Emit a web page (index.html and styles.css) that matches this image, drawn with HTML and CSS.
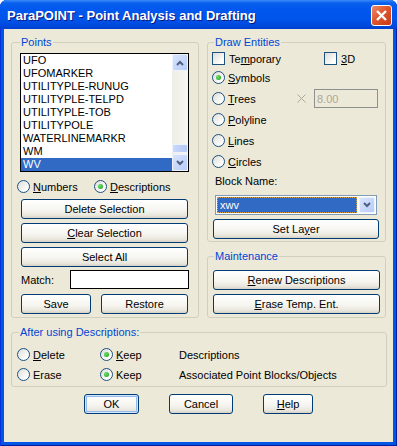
FILE: index.html
```html
<!DOCTYPE HTML>
<html>
    <head>
        <title>ParaPOINT - Point Analysis and Drafting</title>
        <meta name="viewport" content="width=device-width, initial-scale=1">
        <link rel="stylesheet" href="styles.css">
    </head>
    <body>
        <div class="window">
            <div class="titlebar">
                <span class="title">ParaPOINT - Point Analysis and Drafting</span>
                <span class="close">
                    <svg width="19" height="19" viewBox="0 0 19 19"><path d="M5 5 L14 14 M14 5 L5 14" /></svg>
                </span>
            </div>
            <div class="client">
                <div class="top">
                    <fieldset class="group points">
                        <legend>Points</legend>
                        <div class="listbox">
                            <ul class="items">
                                <li>UFO</li>
                                <li>UFOMARKER</li>
                                <li>UTILITYPLE-RUNUG</li>
                                <li>UTILITYPLE-TELPD</li>
                                <li>UTILITYPLE-TOB</li>
                                <li>UTILITYPOLE</li>
                                <li>WATERLINEMARKR</li>
                                <li>WM</li>
                                <li class="sel">WV</li>
                            </ul>
                            <div class="vscroll">
                                <span class="sbtn"><svg width="8" height="6" viewBox="0 0 8 6"><path d="M1 5 L4 2 L7 5" /></svg></span>
                                <span class="track"><span class="thumb"></span></span>
                                <span class="sbtn"><svg width="8" height="6" viewBox="0 0 8 6"><path d="M1 1 L4 4 L7 1" /></svg></span>
                            </div>
                        </div>
                        <div class="radios">
                            <span class="opt num"><span class="radio"></span><span><u>N</u>umbers</span></span>
                            <span class="opt"><span class="radio on"></span><span><u>D</u>escriptions</span></span>
                        </div>
                        <button class="btn wide first">Delete Selection</button>
                        <button class="btn wide"><u>C</u>lear Selection</button>
                        <button class="btn wide">Select All</button>
                        <div class="match">
                            <label for="match">Match:</label>
                            <input class="edit" type="text" id="match">
                        </div>
                        <div class="pair">
                            <button class="btn save">Save</button>
                            <button class="btn restore">Restore</button>
                        </div>
                    </fieldset>

                    <div class="rightcol">
                        <fieldset class="group draw">
                            <legend>Draw Entities</legend>
                            <div class="checks">
                                <span class="opt"><span class="check"></span><span>Te<u>m</u>porary</span></span>
                                <span class="opt"><span class="check"></span><span><u>3</u>D</span></span>
                            </div>
                            <span class="opt sym"><span class="radio on"></span><span><u>S</u>ymbols</span></span>
                            <div class="opt trees">
                                <span class="tlabel"><span class="radio"></span><span><u>T</u>rees</span></span>
                                <svg class="xmark" width="9" height="9" viewBox="0 0 9 9"><path d="M0.5 0.5 L8.5 8.5 M8.5 0.5 L0.5 8.5" /></svg>
                                <input class="edit off" type="text" value="8.00" disabled>
                            </div>
                            <span class="opt row"><span class="radio"></span><span><u>P</u>olyline</span></span>
                            <span class="opt row"><span class="radio"></span><span><u>L</u>ines</span></span>
                            <span class="opt row"><span class="radio"></span><span><u>C</u>ircles</span></span>
                            <div class="blabel">Block Name:</div>
                            <div class="combo">
                                <span class="cval">xwv</span>
                                <span class="cbtn"><svg width="8" height="6" viewBox="0 0 8 6"><path d="M1 1 L4 4 L7 1" /></svg></span>
                            </div>
                            <button class="btn wide layer">Set La<u>y</u>er</button>
                        </fieldset>

                        <fieldset class="group maint">
                            <legend>Maintenance</legend>
                            <button class="btn"><u>R</u>enew Descriptions</button>
                            <button class="btn erase"><u>E</u>rase Temp. Ent.</button>
                        </fieldset>
                    </div>
                </div>

                <fieldset class="group after">
                    <legend>After using Descriptions:</legend>
                    <div class="grid">
                        <span class="opt"><span class="radio"></span><span><u>D</u>elete</span></span>
                        <span class="opt"><span class="radio on"></span><span><u>K</u>eep</span></span>
                        <span class="opt">Descriptions</span>
                        <span class="opt"><span class="radio"></span><span>Erase</span></span>
                        <span class="opt"><span class="radio on"></span><span>Keep</span></span>
                        <span class="opt">Associated Point Blocks/Objects</span>
                    </div>
                </fieldset>

                <div class="actions">
                    <button class="btn ok">OK</button>
                    <button class="btn cancel">Cancel</button>
                    <button class="btn help"><u>H</u>elp</button>
                </div>
            </div>
        </div>
    </body>
</html>
```

FILE: styles.css
```css
* { box-sizing: border-box; }
body { margin: 0; font-family: "Liberation Sans", Arial, sans-serif; font-size: 11px; color: #000; }
u { text-decoration: underline; text-underline-offset: 1px; }

.window { width: 397px; height: 446px; display: flex; flex-direction: column; background: #0055E5; border-radius: 7px 7px 0 0; overflow: hidden; box-shadow: inset 1px 0 #0831D9, inset -1px 0 #001EA0, inset 0 -1px #001EA0; }
.titlebar { height: 29px; flex: none; display: flex; align-items: center; padding: 2px 5px 0 7px; background: linear-gradient(#3C8CF8 0%, #0A61EE 10%, #0058EE 30%, #0055EB 65%, #0049DD 88%, #003FCF 100%); }
.title { flex: 1; color: #fff; font-weight: bold; font-size: 13px; text-shadow: 1px 1px 0 #0A1883; }
.close { width: 21px; height: 21px; display: flex; align-items: center; justify-content: center; border: 1px solid #fff; border-radius: 3px; background: linear-gradient(135deg, #EE8A6C, #E0572F 45%, #C93A14); }
.close path { stroke: #fff; stroke-width: 2.4; fill: none; }

.client { flex: 1; margin: 0 4px 4px; background: #ECE9D8; padding: 7px 0 0 7px; }
.top { display: flex; gap: 8px; }

.group { margin: 0; min-width: 0; border: 1px solid #D0D0BF; border-radius: 3px; }
.group legend { padding: 0 1px; line-height: 13px; color: #0046D5; }

.points { width: 188px; padding: 4px 9px 3px 8px; }
.listbox { display: flex; height: 119px; border: 1px solid #000; background: #fff; }
.items { flex: 1; list-style: none; margin: 0; padding: 0; }
.items li { height: 13px; line-height: 13px; padding-left: 2px; }
.items li.sel { background: #316AC5; color: #fff; }
.vscroll { width: 16px; display: flex; flex-direction: column; background: linear-gradient(90deg, #EEEDE5, #F7F7F3); }
.sbtn { height: 17px; flex: none; display: flex; align-items: center; justify-content: center; border: 1px solid #EEF2FD; border-radius: 2px; background: linear-gradient(135deg, #D8E4FD, #B9CCF8); }
.sbtn path, .cbtn path { stroke: #4D6185; stroke-width: 2; fill: none; }
.track { flex: 1; display: flex; flex-direction: column; justify-content: flex-end; padding-bottom: 1px; }
.thumb { height: 9px; border: 1px solid #EEF2FD; border-radius: 2px; background: linear-gradient(90deg, #C9D8FC, #B3C8F6); }

.opt { display: flex; align-items: center; gap: 3px; height: 13px; white-space: nowrap; }
.radio { width: 13px; height: 13px; flex: none; display: flex; align-items: center; justify-content: center; border: 1px solid #1C5180; border-radius: 50%; background: linear-gradient(135deg, #DCDCD7, #FFFFFF 80%); }
.radio.on::after { content: ""; width: 5px; height: 5px; border-radius: 50%; background: radial-gradient(circle at 35% 35%, #6EE06A, #1A9E1A); }
.check { width: 13px; height: 13px; flex: none; border: 1px solid #1C5180; background: linear-gradient(135deg, #DCDCD7, #FFFFFF 80%); margin-right: 1px; }

.radios { display: flex; margin: 8px 0 0 -3px; }
.radios .num { width: 77px; }

.btn { display: flex; align-items: center; justify-content: center; width: 100%; height: 20px; padding: 0; border: 1px solid #003C74; border-radius: 3px; font: inherit; color: #000; background: linear-gradient(#FFFFFF, #F6F5F0 55%, #E9E7DD 85%, #D6D0C5); }
.btn.wide { width: calc(100% - 2px); margin: 4px 1px 0; }
.points .btn.first { margin-top: 6px; }

.match { display: flex; align-items: center; margin-top: 3px; padding-left: 1px; }
.match label { width: 49px; }
.edit { flex: 1; min-width: 0; height: 19px; border: 1px solid #000; background: #fff; font: inherit; padding: 0 2px; }

.pair { display: flex; gap: 10px; margin: 5px 1px 0; }
.save { flex: none; width: 70px; }
.restore { flex: 1; }

.rightcol { display: flex; flex-direction: column; gap: 8px; }
.draw { width: 179px; padding: 3px 5px 2px 4px; }
.draw legend, .maint legend { margin-left: 2px; }
.checks { display: grid; grid-template-columns: 112px auto; }
.sym { margin-top: 6px; }
.row { margin-top: 8px; }
.trees { margin-top: 8px; gap: 0; }
.tlabel { display: flex; align-items: center; gap: 3px; width: 85px; }
.xmark path { stroke: #ACA899; stroke-width: 1; fill: none; }
.edit.off { flex: none; width: 64px; margin-left: 8px; border-color: #8E8F8F; background: #ECE9D8; color: #ACA899; }
.blabel { margin: 7px 0 0 3px; line-height: 13px; }
.combo { display: flex; width: 162px; height: 20px; margin: 7px 0 0 3px; padding: 1px; border: 1px solid #7F9DB9; background: #fff; }
.cval { flex: 1; padding-left: 2px; line-height: 14px; color: #fff; background: #316AC5; border: 1px dotted #D6A04A; }
.cbtn { width: 16px; margin-left: 2px; display: flex; align-items: center; justify-content: center; border: 1px solid #EEF2FD; border-radius: 2px; background: linear-gradient(135deg, #D8E4FD, #B9CCF8); }

.maint { width: 179px; padding: 7px 5px 3px 5px; }
.maint legend { margin-left: 1px; }
.maint .erase { margin-top: 4px; }

.after { width: 376px; margin-top: 8px; padding: 9px 5px 5px 5px; }
.after legend { margin-left: 2px; }
.grid { display: grid; grid-template-columns: 83px 79px auto; row-gap: 7px; }

.actions { display: flex; gap: 30px; margin: 7px 0 0 73px; }
.ok { width: 55px; box-shadow: inset 0 0 0 1px #CEE7FF, inset 0 0 0 2px #98B8EA; }
.cancel { width: 64px; }
.help { width: 50px; }
```
